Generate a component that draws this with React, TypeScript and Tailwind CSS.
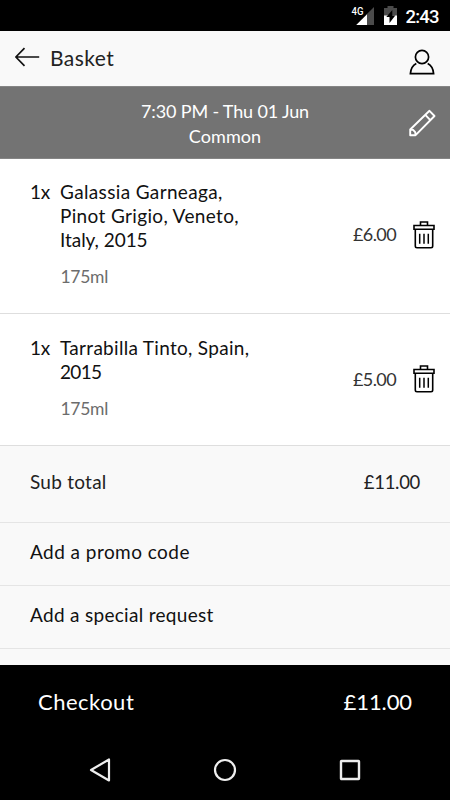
import React from 'react';

function StatusBar() {
  return (
    <div className="flex h-[31px] shrink-0 items-start bg-black text-white">
      <svg className="h-[31px] w-[450px]" viewBox="0 0 450 31">
        <text x="351.5" y="15" fill="#fff" fontSize="10.5" fontWeight="500" textLength="12" lengthAdjust="spacingAndGlyphs" className="font-['Roboto',sans-serif]">4G</text>
        <path d="M374 7v18h-7.3V14.300z" fill="#4b4b4b" />
        <path d="M367 14.200V25h-10.800z" fill="#fff" />
        <path d="M387.500 6h6v2h3.500v8h-13V8h3.500z" fill="#4b4b4b" />
        <path d="M384 15.500h13V25h-13z" fill="#fff" />
        <path d="M392.300 10v5.500h3l-5.800 7.500V17h-3.200z" fill="#000" />
        <text x="405.500" y="22.800" fill="#fff" fontSize="18.500" fontWeight="500" textLength="34" className="font-['Roboto',sans-serif]">2:43</text>
      </svg>
    </div>
  );
}

function Trash() {
  return (
    <svg className="h-[28px] w-[22px] shrink-0" viewBox="0 0 22 28" fill="none" stroke="#000" strokeWidth="1.6">
      <path d="M7.500 4.200V1h7v3.200M1 4.500h20v3.800H1zM2.300 8.500v16.500a1.700 1.700 0 0 0 1.700 1.700h14a1.700 1.700 0 0 0 1.700-1.700V8.500" />
      <path d="M6.700 12.800v10M11 12.800v10M15.300 12.800v10" strokeWidth="1.500" />
    </svg>
  );
}

type ItemProps = {
  lines: { text: string; spacing: string }[];
  price: string;
  className: string;
  asideClass: string;
  priceClass: string;
};

function Item({ lines, price, className, asideClass, priceClass }: ItemProps) {
  return (
    <section className={`flex shrink-0 border-b border-[#dedede] bg-white pl-[30px] pr-[15px] text-[19px] leading-[24px] text-[#111] ${className}`}>
      <span className="w-[30px] tracking-[-0.2px]">1x</span>
      <div className="flex-1">
        {lines.map((l) => (
          <div key={l.text} className={`whitespace-nowrap ${l.spacing}`}>{l.text}</div>
        ))}
        <div className="mt-[13px] pl-[0.500px] text-[17.500px] tracking-[-0.3px] text-[#6c6c6c]">175ml</div>
      </div>
      <div className={`flex h-[28px] items-center ${asideClass}`}>
        <span className={`mr-[17px] text-[18px] tracking-[-0.6px] text-[#333] ${priceClass}`}>{price}</span>
        <Trash />
      </div>
    </section>
  );
}

export default function App() {
  return (
    <main className="flex h-[800px] w-[450px] flex-col overflow-hidden bg-[#f9f9f9] font-['Lato',sans-serif]">
      <StatusBar />
      <header className="flex h-[55px] shrink-0 items-center bg-[#f9f9f9] pl-[15px] pr-[15px]">
        <svg className="mt-[-3px] h-[20px] w-[25px]" viewBox="0 0 25 20" fill="none" stroke="#111" strokeWidth="1.700">
          <path d="M24.200 10H1M9.500 1.200.9 10l8.600 8.800" />
        </svg>
        <h1 className="ml-[10px] mt-[-2px] flex-1 text-[21px] font-normal leading-[24px] tracking-[0.45px] text-[#222]">Basket</h1>
        <svg className="mt-[7px] h-[26px] w-[26px]" viewBox="0 0 26 26" fill="none" stroke="#000" strokeWidth="1.700">
          <circle cx="13" cy="8" r="6.600" />
          <path d="M7.300 14.600C4 16.300 1.800 20 1.400 24.600h23.200c-.4-4.600-2.600-8.300-5.900-10" />
        </svg>
      </header>
      <section className="flex h-[73px] shrink-0 items-center border-b border-t border-[#858585] bg-[#737373] pl-[42px] pr-[14px] text-white">
        <div className="flex-1 pt-[3px] text-center text-[18px] leading-[25px]">
          <div className="tracking-[-0.15px]">7:30 PM - Thu 01 Jun</div>
          <div className="tracking-[0.1px]">Common</div>
        </div>
        <svg className="h-[28px] w-[28px]" viewBox="0 0 28 28" fill="none" stroke="#fff" strokeWidth="1.900" strokeLinejoin="round">
          <path d="M2.200 26.200v-5.700L21.500 1.800l5 5.200L7.600 26.200zM17.300 5.900l5 5.200M2.200 20.500l2.900.4 2.100 2.200.4 3.100" />
        </svg>
      </section>
      <Item
        lines={[
          { text: 'Galassia Garneaga,', spacing: 'tracking-[0.35px]' },
          { text: 'Pinot Grigio, Veneto,', spacing: 'tracking-[0.35px]' },
          { text: 'Italy, 2015', spacing: 'tracking-[-0.05px]' },
        ]}
        price="£6.00"
        className="h-[155px] pt-[21px]"
        asideClass="mt-[41px]"
        priceClass="pb-[3px]"
      />
      <Item
        lines={[
          { text: 'Tarrabilla Tinto, Spain,', spacing: 'tracking-[0.3px]' },
          { text: '2015', spacing: 'tracking-[-0.7px]' },
        ]}
        price="£5.00"
        className="h-[132px] pt-[22px]"
        asideClass="mt-[29px]"
        priceClass="pb-[1px]"
      />
      <div className="flex h-[77px] shrink-0 items-center justify-between border-b border-[#e5e5e5] px-[30px] pb-[4px] text-[19px] leading-[24px] text-[#222]">
        <span className="tracking-[0.25px]">Sub total</span>
        <span className="text-[18.5px] tracking-[-0.3px]">£11.00</span>
      </div>
      <div className="flex h-[63px] shrink-0 items-center border-b border-[#e5e5e5] px-[30px] pb-[5px] text-[19px] leading-[24px] text-[#111]">
        <span className="tracking-[0.45px]">Add a promo code</span>
      </div>
      <div className="flex h-[63px] shrink-0 items-center border-b border-[#e5e5e5] px-[30px] pb-[4px] text-[19px] leading-[24px] text-[#111]">
        <span className="tracking-[0.3px]">Add a special request</span>
      </div>
      <div className="h-[16px] shrink-0" />
      <button className="flex h-[75px] shrink-0 items-center justify-between bg-black px-[38px] pb-[2px] text-[22px] leading-[28px] text-white">
        <span className="tracking-[0.5px]">Checkout</span>
        <span className="tracking-[-0.1px]">£11.00</span>
      </button>
      <nav className="flex h-[60px] shrink-0 items-center justify-between bg-black px-[89px]">
        <svg className="h-[24px] w-[22px]" viewBox="0 0 22 24" fill="none" stroke="#eee" strokeWidth="2.200" strokeLinejoin="round">
          <path d="M20 1.500v21L2 12z" />
        </svg>
        <svg className="h-[24px] w-[24px]" viewBox="0 0 24 24" fill="none" stroke="#eee" strokeWidth="2.200">
          <circle cx="12" cy="12" r="10" />
        </svg>
        <svg className="h-[22px] w-[22px]" viewBox="0 0 22 22" fill="none" stroke="#eee" strokeWidth="2.400">
          <rect x="2" y="2" width="18" height="18" rx=".5" />
        </svg>
      </nav>
    </main>
  );
}
